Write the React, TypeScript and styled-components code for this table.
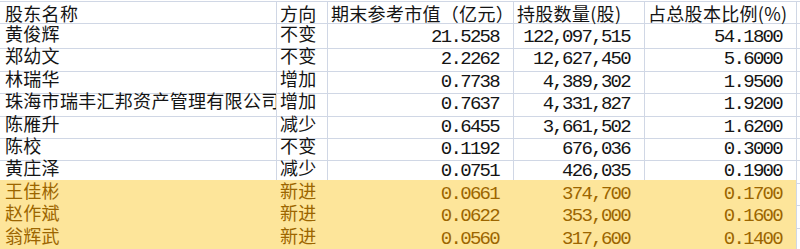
import React from "react";
import styled, { createGlobalStyle } from "styled-components";

const GlobalStyle = createGlobalStyle`
  html, body {
    margin: 0;
    padding: 0;
    background: #ffffff;
  }
  body {
    width: 800px;
    height: 249px;
    overflow: hidden;
  }
`;

const COLS = "277px 51px 186px 131px 152px 1fr";
const GRID = "#d0d7e5";
const FILL = "#fde59a";
const FILL_TEXT = "#9c6500";

const Sheet = styled.div`
  margin-top: 1px;
  border-top: 1px solid ${GRID};
  display: flex;
  flex-direction: column;
  width: 800px;
`;

const Row = styled.div<{ $header?: boolean }>`
  display: grid;
  grid-template-columns: ${COLS};
  height: ${(p) => (p.$header ? "21px" : "22.4px")};
`;

const Cell = styled.div<{
  $num?: boolean;
  $first?: boolean;
  $hl?: boolean;
  $last?: boolean;
  $header?: boolean;
}>`
  box-sizing: border-box;
  overflow-x: clip;
  overflow-y: visible;
  white-space: nowrap;
  border-right: 1px solid ${(p) => (p.$hl && !p.$last ? FILL : GRID)};
  border-bottom: 1px solid ${(p) => (p.$hl ? FILL : GRID)};
  background: ${(p) => (p.$hl ? FILL : "transparent")};
  color: ${(p) => (p.$hl ? FILL_TEXT : "#141414")};
  text-align: ${(p) => (p.$num ? "right" : "left")};
  padding-left: ${(p) => (p.$first ? "5px" : "3px")};
  padding-right: ${(p) => (p.$num ? "14px" : "0")};
  padding-top: ${(p) => (p.$num ? "4px" : p.$header ? "1px" : "0")};
  font-family: ${(p) =>
    p.$num
      ? `"Liberation Mono", "Noto Sans CJK SC", monospace`
      : `"Noto Sans CJK SC", sans-serif`};
  font-size: ${(p) => (p.$num ? "19px" : "18px")};
  letter-spacing: ${(p) => (p.$num ? "-1.7px" : "0.3px")};
  line-height: ${(p) => (p.$header ? "20px" : "21.4px")};
`;

const Spare = styled.div`
  border-bottom: 1px solid ${GRID};
`;

type Holder = {
  name: string;
  dir: string;
  value: string;
  shares: string;
  ratio: string;
  hl?: boolean;
};

const holders: Holder[] = [
  { name: "黄俊辉", dir: "不变", value: "21.5258", shares: "122,097,515", ratio: "54.1800" },
  { name: "郑幼文", dir: "不变", value: "2.2262", shares: "12,627,450", ratio: "5.6000" },
  { name: "林瑞华", dir: "增加", value: "0.7738", shares: "4,389,302", ratio: "1.9500" },
  { name: "珠海市瑞丰汇邦资产管理有限公司", dir: "增加", value: "0.7637", shares: "4,331,827", ratio: "1.9200" },
  { name: "陈雁升", dir: "减少", value: "0.6455", shares: "3,661,502", ratio: "1.6200" },
  { name: "陈校", dir: "不变", value: "0.1192", shares: "676,036", ratio: "0.3000" },
  { name: "黄庄泽", dir: "减少", value: "0.0751", shares: "426,035", ratio: "0.1900" },
  { name: "王佳彬", dir: "新进", value: "0.0661", shares: "374,700", ratio: "0.1700", hl: true },
  { name: "赵作斌", dir: "新进", value: "0.0622", shares: "353,000", ratio: "0.1600", hl: true },
  { name: "翁辉武", dir: "新进", value: "0.0560", shares: "317,600", ratio: "0.1400", hl: true },
];

export default function App() {
  return (
    <>
      <GlobalStyle />
      <Sheet>
        <Row $header>
          <Cell $first $header>股东名称</Cell>
          <Cell $header>方向</Cell>
          <Cell $header>期末参考市值（亿元）</Cell>
          <Cell $header>持股数量(股)</Cell>
          <Cell $header>占总股本比例(%)</Cell>
          <Spare />
        </Row>
        {holders.map((h) => (
          <Row key={h.name}>
            <Cell $first $hl={h.hl}>{h.name}</Cell>
            <Cell $hl={h.hl}>{h.dir}</Cell>
            <Cell $num $hl={h.hl}>{h.value}</Cell>
            <Cell $num $hl={h.hl}>{h.shares}</Cell>
            <Cell $num $last $hl={h.hl}>{h.ratio}</Cell>
            <Spare />
          </Row>
        ))}
      </Sheet>
    </>
  );
}
